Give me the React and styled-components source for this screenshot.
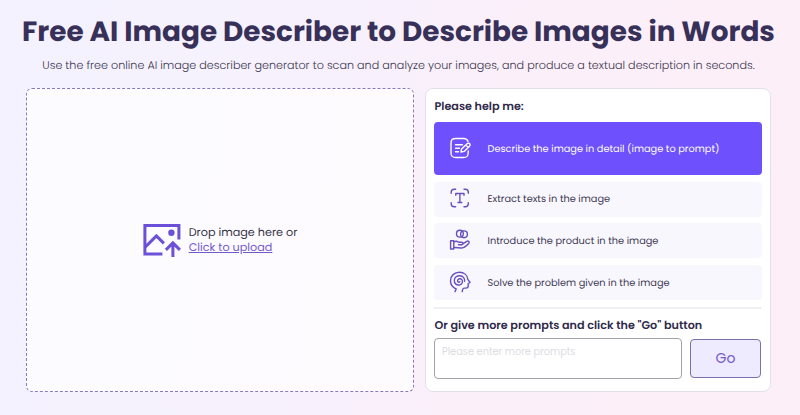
import styled, { createGlobalStyle } from "styled-components";

const GlobalStyle = createGlobalStyle`
  * {
    box-sizing: border-box;
  }
  body {
    margin: 0;
    font-family: Poppins, Inter, "Open Sans", sans-serif;
    text-rendering: geometricPrecision;
    color: #373155;
  }
`;

const Page = styled.main`
  height: 415px;
  padding: 12px 29px 0 26px;
  overflow: hidden;
  background: linear-gradient(100deg, #f4f2ff 0%, #f6f1fd 35%, #fbeff9 65%, #fdeff8 100%);
`;

const Title = styled.h1`
  margin: 0 -20px;
  font-size: 27.9px;
  line-height: 40px;
  font-weight: 700;
  text-align: center;
  white-space: nowrap;
  color: #373059;
`;

const Subtitle = styled.p`
  margin: 3px 0 0;
  font-size: 11.17px;
  line-height: 20px;
  font-weight: 300;
  text-align: center;
  white-space: nowrap;
  color: #3b364e;
`;

const Columns = styled.div`
  display: grid;
  grid-template-columns: 388px 346px;
  gap: 11px;
  height: 304px;
  margin-top: 13px;
`;

const DropZone = styled.div`
  display: flex;
  align-items: center;
  justify-content: center;
  gap: 7px;
  border: 1px dashed #8a78c0;
  border-radius: 6px;
  background: rgba(255, 255, 255, 0.72);
`;

const DropText = styled.div`
  font-size: 11.2px;
  line-height: 15px;
  color: #373448;
`;

const UploadLink = styled.a`
  display: block;
  width: fit-content;
  color: #7259cc;
  text-decoration: underline;
`;

const Panel = styled.section`
  padding: 8px 8px 0;
  border: 1px solid #e5deec;
  border-radius: 8px;
  background: #fff;
`;

const Heading = styled.h2`
  margin: ${(props) => (props.$spaced ? "7px" : "0")} 0 0 0.5px;
  font-size: 11.2px;
  line-height: 18px;
  font-weight: 600;
  white-space: nowrap;
  color: #302a4b;
`;

const Options = styled.div`
  display: flex;
  flex-direction: column;
  gap: 6.7px;
  margin-top: 7px;
  padding-bottom: 6.9px;
  border-bottom: 2px solid #f0eff3;
`;

const Option = styled.div`
  display: flex;
  align-items: center;
  gap: 15.5px;
  height: ${(props) => (props.$active ? "53px" : "35px")};
  padding: 2px 0 0 15px;
  border-radius: 4px;
  font-size: 9.77px;
  color: ${(props) => (props.$active ? "#fff" : "#3d3851")};
  background: ${(props) => (props.$active ? "#6e50fc" : "#f8f7fe")};

  svg {
    flex: none;
    margin-bottom: 4px;
    color: ${(props) => (props.$active ? "#fff" : "#6750bd")};
  }
`;

const PromptRow = styled.div`
  display: flex;
  align-items: center;
  gap: 8px;
  margin-top: 4px;
`;

const PromptInput = styled.textarea`
  width: 248px;
  height: 41px;
  padding: 6px 7px;
  border: 1px solid #a3a2a8;
  border-radius: 4px;
  resize: none;
  font: inherit;
  font-size: 9.8px;
  line-height: 13px;
  background: #fff;

  &::placeholder {
    color: #dddce2;
  }
`;

const GoButton = styled.button`
  width: 71px;
  height: 39px;
  padding: 0;
  border: 1px solid #7c70ac;
  border-radius: 4px;
  font: inherit;
  font-size: 14px;
  color: #735bc8;
  background: #eeeaff;
`;

const UploadIcon = () => (
  <svg width="39" height="34" viewBox="0.6 -0.4 39 34" fill="none" stroke="#6c50d8" strokeWidth="3">
    <path d="M36.5 16V2H2.5v28.5H20" />
    <path d="M3 23.5l11-11 7.5 7.5" />
    <circle cx="29" cy="9.3" r="3.2" fill="#6c50d8" stroke="none" />
    <path d="M30.5 33.5V20.5M23.5 26.5l7-7 7 7" />
  </svg>
);

const LineIcon = ({ children }) => (
  <svg
    width="23"
    height="22"
    viewBox="0 0 23 22"
    fill="none"
    stroke="currentColor"
    strokeWidth="1.4"
    strokeLinecap="round"
    strokeLinejoin="round"
  >
    {children}
  </svg>
);

const EditIcon = () => (
  <LineIcon>
    <path d="M19 4.5C18.4 2.2 17 1.5 14.5 1.5H7C3.2 1.5 2 2.8 2 6.5v9c0 3.7 1.2 5 5 5h7.2c3.8 0 5-1.3 5-5V14" />
    <path d="M6.5 7.8h7M6.5 11.2h4M6.5 14.7h3" />
    <path d="M12 15l.6-3.1 5.5-5.2c.9-.8 2-.7 2.6 0s.6 1.7-.2 2.5l-5.4 5.2L12 15zM16.800 8l2.300 2.400" />
  </LineIcon>
);

const TextIcon = () => (
  <LineIcon>
    <path d="M2.2 6.3V5.2c0-2 1.1-3 3-3h1.4M15 2.2h1.3c2 0 3 1 3 3v1.1M19.3 15.6v1.2c0 2-1 3-3 3H15M6.6 19.8H5.2c-1.9 0-3-1-3-3v-1.2" />
    <path d="M6.8 8.2V6.5H15v1.7M10.9 6.5v9M9 15.5h3.8" />
  </LineIcon>
);

const HandIcon = () => (
  <LineIcon>
    <circle cx="10.9" cy="4.7" r="3.4" />
    <circle cx="15" cy="5.3" r="3.4" />
    <path d="M1.6 11.8h3.2v8.2H1.6z" />
    <path d="M4.8 13c1.500-1 3.200-1 4.800.2h3c1.700 0 2 2.200.2 2.500H9.500M13.800 14.800l3.900-2.500c1.800-1 3.300.7 2 2.200-2.500 2.700-4.200 4.300-6.900 4.500-2.800.1-5.300-.2-8-.5" />
  </LineIcon>
);

const HeadIcon = () => (
  <LineIcon>
    <path d="M6 20.6l1.2-2.6c-3.7-1.5-5.7-4.4-5.7-8.2C1.5 4.7 5.4 1.3 10.5 1.3c4.5 0 7.9 2.7 8.3 7l2.3 3.2-1.9 1v2.600c0 1.500-.8 2-2.200 2h-1.800c-1 0-1.300.6-1.500 1.300l-.5 2.200" />
    <path d="M10.8 10.8c-1 1-2.500.1-2.200-1.200.4-2 3-2.500 4.200-1 1.400 1.800.5 4.500-1.800 5.200-3.200.9-6-1.300-5.700-4.500.2-3 2.700-4.800 5.600-4.600 3 .2 5 2.500 4.700 5.500" />
  </LineIcon>
);

const App = () => (
  <>
    <GlobalStyle />
    <Page>
      <Title>Free AI Image Describer to Describe Images in Words</Title>
      <Subtitle>
        Use the free online AI image describer generator to scan and analyze your images, and produce a textual description in seconds.
      </Subtitle>
      <Columns>
        <DropZone>
          <UploadIcon />
          <DropText>
            Drop image here or
            <UploadLink>Click to upload</UploadLink>
          </DropText>
        </DropZone>
        <Panel>
          <Heading>Please help me:</Heading>
          <Options>
            <Option $active>
              <EditIcon />
              Describe the image in detail (image to prompt)
            </Option>
            <Option>
              <TextIcon />
              Extract texts in the image
            </Option>
            <Option>
              <HandIcon />
              Introduce the product in the image
            </Option>
            <Option>
              <HeadIcon />
              Solve the problem given in the image
            </Option>
          </Options>
          <Heading $spaced>Or give more prompts and click the "Go" button</Heading>
          <PromptRow>
            <PromptInput placeholder="Please enter more prompts" />
            <GoButton>Go</GoButton>
          </PromptRow>
        </Panel>
      </Columns>
    </Page>
  </>
);

export default App;
